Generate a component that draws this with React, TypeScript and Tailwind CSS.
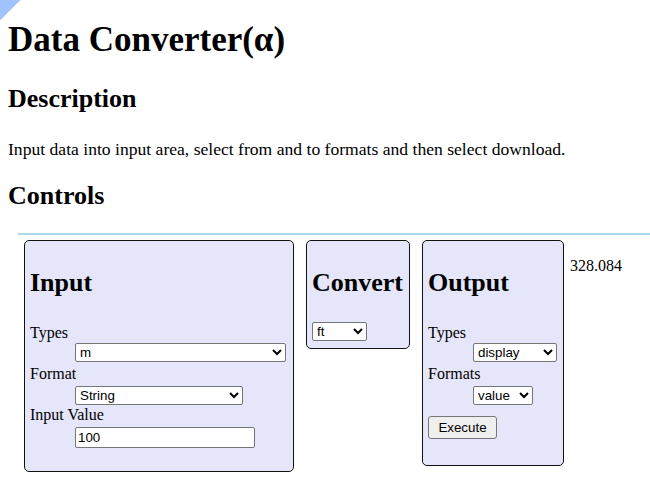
import React from 'react';

const ctrl = "font-['Liberation_Sans',Arial,sans-serif] text-[13.333px] text-black";

const selectCls = `${ctrl} block h-[19px] bg-white border border-[#767676] rounded-[2px]`;

interface FieldProps {
  label: string;
  first?: boolean;
  children: React.ReactNode;
}

const Field: React.FC<FieldProps> = ({ label, first, children }) => (
  <>
    <div className={`text-[16px] leading-[18px] ${first ? 'mt-[26px]' : 'mt-[3px]'}`}>{label}</div>
    {children}
  </>
);

export default function App() {
  return (
    <div className="relative min-h-screen bg-white px-2 pb-4 font-['Liberation_Serif','Times_New_Roman',serif] text-black">
      {/* corner ribbon */}
      <svg className="absolute left-0 top-0" width="21" height="21" viewBox="0 0 21 21">
        <polygon points="0,0 20.5,0 0,20.5" fill="#a0c4ff" />
      </svg>

      <h1 className="pt-[20px] text-[35px] font-bold leading-[40px]">Data Converter(α)</h1>

      <h2 className="mt-[24px] text-[26px] font-bold leading-[30px]">Description</h2>
      <p className="mt-[24.5px] text-[17.6px] leading-[20px]">
        Input data into input area, select from and to formats and then select download.
      </p>

      <h2 className="mt-[22px] text-[26px] font-bold leading-[30px]">Controls</h2>

      {/* CONTROLS PANEL */}
      <div className="-mr-2 ml-[10px] mt-[22.5px] h-[2px] bg-[#add8e6]" />
      <div className="ml-[10px] mt-[5px] flex items-start">
        {/* INPUT */}
        <div className="ml-[6px] h-[232px] w-[270px] rounded-[5px] border border-[#111] bg-[#e6e6fa] px-[5px]">
          <h2 className="mt-[27px] text-[26px] font-bold leading-[30px]">Input</h2>
          <Field label="Types" first>
            <select className={`${selectCls} ml-[45px] mt-[1px] w-[211px]`} defaultValue="m">
              <option value="m">m</option>
              <option value="km">km</option>
              <option value="ft">ft</option>
            </select>
          </Field>
          <Field label="Format">
            <select className={`${selectCls} ml-[45px] mt-[3px] w-[168px]`} defaultValue="String">
              <option value="String">String</option>
              <option value="Number">Number</option>
            </select>
          </Field>
          <div className="mt-[1px] text-[16px] leading-[18px]">Input Value</div>
          <input
            className={`${ctrl} ml-[45px] mt-[3px] block h-[21px] w-[180px] rounded-[2px] border border-[#767676] bg-white px-[2px]`}
            defaultValue="100"
          />
        </div>

        {/* CONVERT */}
        <div className="ml-[12px] h-[109px] w-[104px] rounded-[5px] border border-[#111] bg-[#e6e6fa] px-[5px]">
          <h2 className="mt-[27px] text-[26px] font-bold leading-[30px]">Convert</h2>
          <select className={`${selectCls} mt-[24px] w-[55px]`} defaultValue="ft">
            <option value="ft">ft</option>
            <option value="m">m</option>
          </select>
        </div>

        {/* OUTPUT */}
        <div className="ml-[12px] h-[226px] w-[142px] rounded-[5px] border border-[#111] bg-[#e6e6fa] px-[5px]">
          <h2 className="mt-[27px] text-[26px] font-bold leading-[30px]">Output</h2>
          <Field label="Types" first>
            <select className={`${selectCls} ml-[45px] mt-[1px] w-[84px]`} defaultValue="display">
              <option value="display">display</option>
              <option value="file">file</option>
            </select>
          </Field>
          <Field label="Formats">
            <select className={`${selectCls} ml-[45px] mt-[3px] w-[60px]`} defaultValue="value">
              <option value="value">value</option>
              <option value="json">json</option>
            </select>
          </Field>
          <button
            className={`${ctrl} mt-[11px] block h-[23px] w-[69px] rounded-[3px] border border-[#767676] bg-[#efefef]`}
          >
            Execute
          </button>
        </div>

        {/* RESULT */}
        <div className="ml-[6px] mt-[17px] text-[16px] leading-[18px]">328.084</div>
      </div>
    </div>
  );
}
